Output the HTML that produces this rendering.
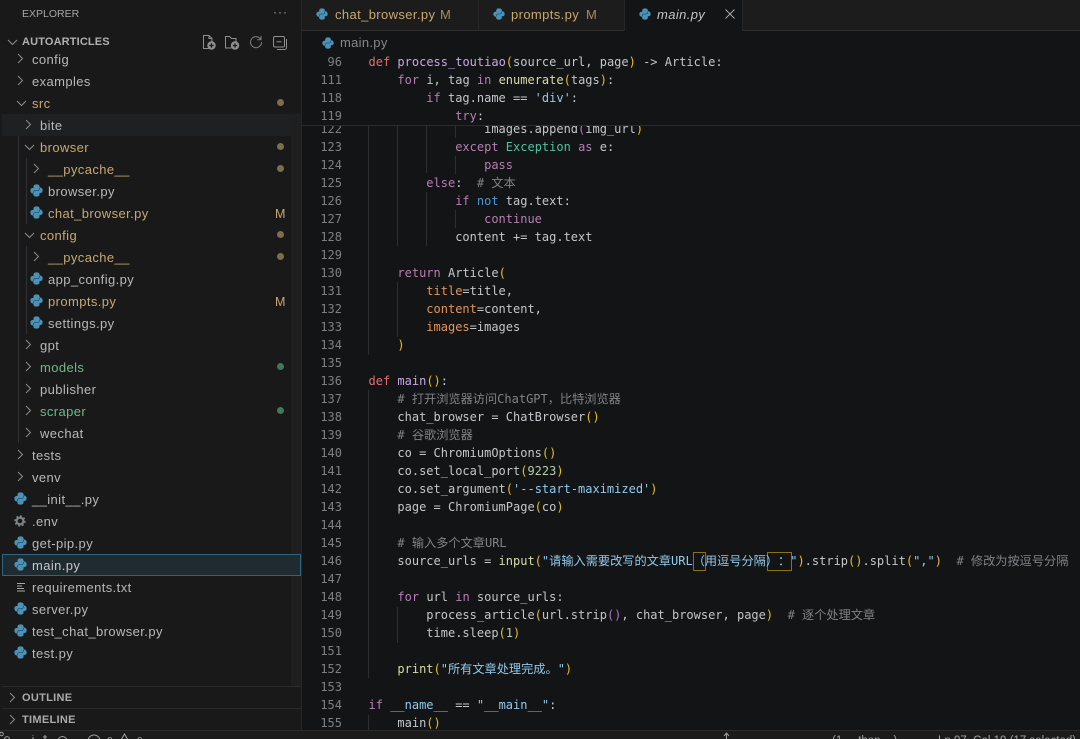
<!DOCTYPE html>
<html><head><meta charset="utf-8"><style>
html,body{margin:0;padding:0;background:#131416;width:1080px;height:739px;overflow:hidden}
#w{position:relative;width:1080px;height:739px;overflow:hidden;background:#131416;filter:blur(.35px)}
.a{position:absolute}
#side{position:absolute;left:0;top:0;width:301px;height:731px;background:#19191a;border-right:1px solid #26272a;font-family:"Liberation Sans",sans-serif;font-size:13px;letter-spacing:.4px;color:#b8b8b8}
.r{position:absolute;left:0;width:301px;height:22px;line-height:22px;white-space:nowrap}
.r span{position:absolute;top:1px}
.r svg{position:absolute}
.y{color:#c8a871}.g{color:#6db98a}
.dot{position:absolute;left:276.5px;width:7px;height:7px;border-radius:50%}
.dy{background:#7d6e4c}.dg{background:#42775c}
.m{position:absolute;left:275px;top:1px;color:#c8a871;font-size:12.5px}
.gd{position:absolute;width:1px;background:#2e3033}
.code{font-family:"DejaVu Sans Mono","Noto Sans CJK SC",monospace;font-size:12px;color:#c3c6ca;text-spacing-trim:space-all}
.l{position:absolute;left:302px;width:778px;height:18px;line-height:18px;white-space:pre;margin-top:.5px}
.l i{position:absolute;left:0;width:40px;text-align:right;font-style:normal;color:#7d8083}
.l b{position:absolute;left:66.5px;font-weight:normal;top:0}
.cj{font-family:"Noto Sans CJK SC",sans-serif;font-size:12.2px;line-height:0;text-spacing-trim:space-all}
.k{color:#b67eb3}.d{color:#df6f6c}.f{color:#c8a6e6}.e{color:#d9dba8}.br{color:#e6bf1f}.p2{color:#b56fc8}
.s{color:#93c9ea}.c{color:#7f8386}.cl{color:#50c0a0}.n{color:#b5cea8}.o{color:#e0955a}.b{color:#4f95cf}
.ig{position:absolute;width:1px;background:#2d2f32}
.ch{fill:none;stroke:#8c8c8c;stroke-width:1}
.tab{position:absolute;top:1px;height:29px;line-height:28px;font-family:"Liberation Sans",sans-serif;font-size:13px;letter-spacing:.38px;white-space:nowrap}
.st{position:absolute;top:734px;font-family:"Liberation Sans",sans-serif;font-size:11.5px;line-height:14px;color:#a0a0a0;white-space:pre}
</style></head><body><div id="w">
<svg width="0" height="0" style="position:absolute"><defs>
<g id="py"><g stroke="#4a93b8" stroke-width="1.5" stroke-linejoin="round"><path fill="#4a93b8" d="M8 1.2C5.7 1.2 5 2.2 5 3.4V5h3.3v.7H3.4C2.1 5.7 1.2 6.7 1.2 8.2s.9 2.7 2.2 2.7H5V9.3c0-1.2.9-2.1 2.1-2.1h2.3c1 0 1.7-.8 1.7-1.7V3.4c0-1.3-1.2-2.2-3.1-2.2z"/><path fill="#4a93b8" d="M8 14.8c2.3 0 3-1 3-2.2V11H7.7v-.7h4.9c1.3 0 2.2-1 2.2-2.5s-.9-2.7-2.2-2.7H11v1.6c0 1.2-.9 2.1-2.1 2.1H6.6c-1 0-1.7.8-1.7 1.7v2.1c0 1.3 1.2 2.2 3.1 2.2z"/></g><path d="M11.5 4.8v1c0 1.3-1 2.2-2.3 2.2H6.8c-1.3 0-2.3.9-2.3 2.2v1" fill="none" stroke="#17191b" stroke-width=".7" opacity=".75"/></g>
<path id="cr" d="M1 1l4.5 4.5L1 10"/>
<path id="cd" d="M1 1l4.5 4.5L10 1"/>
</defs></svg>

<!-- tab bar -->
<div class="a" style="left:302px;top:0;width:778px;height:30px;background:#1c1c1d;border-bottom:1px solid #2e2e2f"></div>
<div class="a" style="left:478px;top:0;width:1px;height:30px;background:#262627"></div>
<div class="a" style="left:624px;top:0;width:119px;height:31px;background:#131416;border-left:1px solid #262627;border-right:1px solid #262627;box-sizing:border-box"></div>
<svg class="a" style="left:316px;top:8px" width="12" height="12" viewBox="0 0 16 16"><use href="#py"/></svg>
<div class="tab y" style="left:335px">chat_browser.py</div><div class="tab y" style="left:440px;color:#a58c5f">M</div>
<svg class="a" style="left:493px;top:8px" width="12" height="12" viewBox="0 0 16 16"><use href="#py"/></svg>
<div class="tab y" style="left:511px">prompts.py</div><div class="tab y" style="left:586px;color:#a58c5f">M</div>
<svg class="a" style="left:639px;top:8px" width="12" height="12" viewBox="0 0 16 16"><use href="#py"/></svg>
<div class="tab" style="left:657px;color:#c4c4c4;font-style:italic">main.py</div>
<svg class="a" style="left:725px;top:9px" width="10" height="10"><path d="M.5.5l9 9M9.5.5l-9 9" stroke="#a8a8a8" fill="none"/></svg>

<div class="code">
<!-- indent guides -->
<div class="ig" style="left:368px;top:125px;height:230px"></div>
<div class="ig" style="left:397px;top:125px;height:121px"></div>
<div class="ig" style="left:426px;top:125px;height:48px"></div>
<div class="ig" style="left:426px;top:192px;height:54px"></div>
<div class="ig" style="left:455px;top:125px;height:13px"></div>
<div class="ig" style="left:455px;top:156px;height:18px"></div>
<div class="ig" style="left:455px;top:210px;height:18px"></div>
<div class="ig" style="left:397px;top:282px;height:55px"></div>
<div class="ig" style="left:368px;top:390px;height:288px"></div>
<div class="ig" style="left:397px;top:607px;height:36px"></div>
<div class="ig" style="left:368px;top:715px;height:16px"></div>

<div class="l" style="top:119.5px"><i>122</i><b>                <span>images.append</span><span class="p2">(</span>img_url<span class="br">)</span></b></div>
<div class="l" style="top:137.5px"><i>123</i><b>            <span class="k">except</span> <span class="cl">Exception</span> <span class="k">as</span> e:</b></div>
<div class="l" style="top:155.5px"><i>124</i><b>                <span class="k">pass</span></b></div>
<div class="l" style="top:173.5px"><i>125</i><b>        <span class="k">else</span>:  <span class="c"># <span class="cj">文本</span></span></b></div>
<div class="l" style="top:191.5px"><i>126</i><b>            <span class="k">if</span> <span class="b">not</span> tag.text:</b></div>
<div class="l" style="top:209.5px"><i>127</i><b>                <span class="k">continue</span></b></div>
<div class="l" style="top:227.5px"><i>128</i><b>            content += tag.text</b></div>
<div class="l" style="top:245.5px"><i>129</i></div>
<div class="l" style="top:263.5px"><i>130</i><b>    <span class="k">return</span> Article<span class="br">(</span></b></div>
<div class="l" style="top:281.5px"><i>131</i><b>        <span class="o">title</span>=title,</b></div>
<div class="l" style="top:299.5px"><i>132</i><b>        <span class="o">content</span>=content,</b></div>
<div class="l" style="top:317.5px"><i>133</i><b>        <span class="o">images</span>=images</b></div>
<div class="l" style="top:335.5px"><i>134</i><b>    <span class="br">)</span></b></div>
<div class="l" style="top:353.5px"><i>135</i></div>
<div class="l" style="top:371.5px"><i>136</i><b><span class="d">def</span> <span class="f">main</span><span class="br">()</span>:</b></div>
<div class="l" style="top:389.5px"><i>137</i><b>    <span class="c"># <span class="cj">打开浏览器访问</span>ChatGPT<span class="cj">，比特浏览器</span></span></b></div>
<div class="l" style="top:407.5px"><i>138</i><b>    chat_browser = ChatBrowser<span class="br">()</span></b></div>
<div class="l" style="top:425.5px"><i>139</i><b>    <span class="c"># <span class="cj">谷歌浏览器</span></span></b></div>
<div class="l" style="top:443.5px"><i>140</i><b>    co = ChromiumOptions<span class="br">()</span></b></div>
<div class="l" style="top:461.5px"><i>141</i><b>    co.set_local_port<span class="br">(</span><span class="n">9223</span><span class="br">)</span></b></div>
<div class="l" style="top:479.5px"><i>142</i><b>    co.set_argument<span class="br">(</span><span class="s">'--start-maximized'</span><span class="br">)</span></b></div>
<div class="l" style="top:497.5px"><i>143</i><b>    page = ChromiumPage<span class="br">(</span>co<span class="br">)</span></b></div>
<div class="l" style="top:515.5px"><i>144</i></div>
<div class="l" style="top:533.5px"><i>145</i><b>    <span class="c"># <span class="cj">输入多个文章</span>URL</span></b></div>
<div class="a" style="left:693px;top:552px;width:11px;height:17px;border:1px solid #8a7217"></div>
<div class="a" style="left:767px;top:552px;width:23px;height:17px;border:1px solid #8a7217"></div>
<div class="l" style="top:551.5px"><i>146</i><b>    source_urls = <span class="e">input</span><span class="br">(</span><span class="s">"<span class="cj">请输入需要改写的文章</span>URL<span class="cj">（用逗号分隔）：</span>"</span><span class="br">)</span>.strip<span class="br">()</span>.split<span class="br">(</span><span class="s">","</span><span class="br">)</span>  <span class="c"># <span class="cj">修改为按逗号分隔</span></span></b></div>
<div class="l" style="top:569.5px"><i>147</i></div>
<div class="l" style="top:587.5px"><i>148</i><b>    <span class="k">for</span> url <span class="k">in</span> source_urls:</b></div>
<div class="l" style="top:605.5px"><i>149</i><b>        process_article<span class="br">(</span>url.strip<span class="p2">()</span>, chat_browser, page<span class="br">)</span>  <span class="c"># <span class="cj">逐个处理文章</span></span></b></div>
<div class="l" style="top:623.5px"><i>150</i><b>        time.sleep<span class="br">(</span><span class="n">1</span><span class="br">)</span></b></div>
<div class="l" style="top:641.5px"><i>151</i></div>
<div class="l" style="top:659.5px"><i>152</i><b>    <span class="e">print</span><span class="br">(</span><span class="s">"<span class="cj">所有文章处理完成。</span>"</span><span class="br">)</span></b></div>
<div class="l" style="top:677.5px"><i>153</i></div>
<div class="l" style="top:695.5px"><i>154</i><b><span class="k">if</span> <span class="s">__name__</span> == <span class="s">"__main__"</span>:</b></div>
<div class="l" style="top:713.5px"><i>155</i><b>    main<span class="br">()</span></b></div>

<!-- sticky scroll -->
<div class="a" style="left:302px;top:31px;width:778px;height:94px;background:#131416;border-bottom:1px solid #2a2b2d"></div>
<svg class="a" style="left:322px;top:37px" width="12" height="12" viewBox="0 0 16 16"><use href="#py"/></svg>
<div class="a" style="left:340px;top:35px;font-family:'Liberation Sans',sans-serif;font-size:13px;letter-spacing:.3px;line-height:16px;color:#85878a">main.py</div>
<div class="l" style="top:52.5px"><i>96</i><b><span class="d">def</span> <span class="f">process_toutiao</span><span class="br">(</span>source_url, page<span class="br">)</span> -&gt; Article:</b></div>
<div class="l" style="top:70.5px"><i>111</i><b>    <span class="k">for</span> i, tag <span class="k">in</span> <span class="e">enumerate</span><span class="br">(</span>tags<span class="br">)</span>:</b></div>
<div class="l" style="top:88.5px"><i>118</i><b>        <span class="k">if</span> tag.name == <span class="s">'div'</span>:</b></div>
<div class="l" style="top:106.5px"><i>119</i><b>            <span class="k">try</span>:</b></div>
</div>

<!-- sidebar -->
<div id="side">
<div class="a" style="left:22px;top:6px;font-size:10.5px;line-height:16px;letter-spacing:0;color:#a6a6a6">EXPLORER</div>
<div class="a" style="left:273px;top:5px;font-size:12px;line-height:14px;letter-spacing:1px;color:#a0a0a0">···</div>
<svg class="a ch" style="left:7px;top:39px" width="11" height="7"><use href="#cd"/></svg>
<div class="a" style="left:22px;top:34px;font-size:11px;line-height:16px;font-weight:bold;letter-spacing:.15px;color:#b0b0b0">AUTOARTICLES</div>
<!-- toolbar icons -->
<svg class="a" style="left:201px;top:34px" width="18" height="17" fill="none" stroke="#8f8f8f"><path d="M8 14.5H2.5V1.5h5.5l3 3v3"/><path d="M8 1.5v3h3"/><circle cx="10.5" cy="11.5" r="4.2" fill="#8f8f8f" stroke="none"/><path d="M10.5 9.3v4.4M8.3 11.5h4.4" stroke="#19191a" stroke-width="1.2"/></svg>
<svg class="a" style="left:224px;top:34px" width="18" height="17" fill="none" stroke="#8f8f8f"><path d="M7.5 14H1.5V2.5h4l2 2h4.5v3"/><circle cx="11" cy="11.5" r="4.2" fill="#8f8f8f" stroke="none"/><path d="M11 9.3v4.4M8.8 11.5h4.4" stroke="#19191a" stroke-width="1.2"/></svg>
<svg class="a" style="left:249px;top:35px" width="14" height="14" fill="none" stroke="#808080"><path d="M11.8 4.5A5.5 5.5 0 1 0 12.5 7"/><path d="M12 1v3.8H8.2"/></svg>
<svg class="a" style="left:273px;top:36px" width="15" height="15" fill="none" stroke="#8f8f8f"><rect x=".5" y=".5" width="11" height="10.5" rx="1.5"/><path d="M3.5 5.7h5M13.5 3v8.5a2 2 0 0 1-2 2H4"/></svg>

<div class="gd" style="left:18px;top:114px;height:329px"></div>
<div class="gd" style="left:26px;top:158px;height:66px"></div>
<div class="gd" style="left:26px;top:246px;height:88px"></div>

<div class="a" style="left:2px;top:114px;width:299px;height:22px;background:#1e2022"></div>
<div class="a" style="left:291px;top:118px;width:10px;height:568px;background:#1f1f1f"></div>

<div class="r" style="top:48px"><svg class="ch" style="left:17px;top:5px" width="7" height="12"><use href="#cr"/></svg><span style="left:32px">config</span></div>
<div class="r" style="top:70px"><svg class="ch" style="left:17px;top:5px" width="7" height="12"><use href="#cr"/></svg><span style="left:32px">examples</span></div>
<div class="r y" style="top:92px"><svg class="ch" style="left:16px;top:8px" width="11" height="7"><use href="#cd"/></svg><span style="left:32px">src</span><div class="dot dy" style="top:7px"></div></div>
<div class="r" style="top:114px"><svg class="ch" style="left:25px;top:5px" width="7" height="12"><use href="#cr"/></svg><span style="left:40px">bite</span></div>
<div class="r y" style="top:136px"><svg class="ch" style="left:24px;top:8px" width="11" height="7"><use href="#cd"/></svg><span style="left:40px">browser</span><div class="dot dy" style="top:7px"></div></div>
<div class="r y" style="top:158px"><svg class="ch" style="left:33px;top:5px" width="7" height="12"><use href="#cr"/></svg><span style="left:48px">__pycache__</span><div class="dot dy" style="top:7px"></div></div>
<div class="r" style="top:180px"><svg style="left:30px;top:4px" width="13" height="13" viewBox="0 0 16 16"><use href="#py"/></svg><span style="left:48px">browser.py</span></div>
<div class="r y" style="top:202px"><svg style="left:30px;top:4px" width="13" height="13" viewBox="0 0 16 16"><use href="#py"/></svg><span style="left:48px">chat_browser.py</span><div class="m">M</div></div>
<div class="r y" style="top:224px"><svg class="ch" style="left:24px;top:8px" width="11" height="7"><use href="#cd"/></svg><span style="left:40px">config</span><div class="dot dy" style="top:7px"></div></div>
<div class="r y" style="top:246px"><svg class="ch" style="left:33px;top:5px" width="7" height="12"><use href="#cr"/></svg><span style="left:48px">__pycache__</span><div class="dot dy" style="top:7px"></div></div>
<div class="r" style="top:268px"><svg style="left:30px;top:4px" width="13" height="13" viewBox="0 0 16 16"><use href="#py"/></svg><span style="left:48px">app_config.py</span></div>
<div class="r y" style="top:290px"><svg style="left:30px;top:4px" width="13" height="13" viewBox="0 0 16 16"><use href="#py"/></svg><span style="left:48px">prompts.py</span><div class="m">M</div></div>
<div class="r" style="top:312px"><svg style="left:30px;top:4px" width="13" height="13" viewBox="0 0 16 16"><use href="#py"/></svg><span style="left:48px">settings.py</span></div>
<div class="r" style="top:334px"><svg class="ch" style="left:25px;top:5px" width="7" height="12"><use href="#cr"/></svg><span style="left:40px">gpt</span></div>
<div class="r g" style="top:356px"><svg class="ch" style="left:25px;top:5px" width="7" height="12"><use href="#cr"/></svg><span style="left:40px">models</span><div class="dot dg" style="top:7px"></div></div>
<div class="r" style="top:378px"><svg class="ch" style="left:25px;top:5px" width="7" height="12"><use href="#cr"/></svg><span style="left:40px">publisher</span></div>
<div class="r g" style="top:400px"><svg class="ch" style="left:25px;top:5px" width="7" height="12"><use href="#cr"/></svg><span style="left:40px">scraper</span><div class="dot dg" style="top:7px"></div></div>
<div class="r" style="top:422px"><svg class="ch" style="left:25px;top:5px" width="7" height="12"><use href="#cr"/></svg><span style="left:40px">wechat</span></div>
<div class="r" style="top:444px"><svg class="ch" style="left:17px;top:5px" width="7" height="12"><use href="#cr"/></svg><span style="left:32px">tests</span></div>
<div class="r" style="top:466px"><svg class="ch" style="left:17px;top:5px" width="7" height="12"><use href="#cr"/></svg><span style="left:32px">venv</span></div>
<div class="r" style="top:488px"><svg style="left:14px;top:4px" width="13" height="13" viewBox="0 0 16 16"><use href="#py"/></svg><span style="left:32px">__init__.py</span></div>
<div class="r" style="top:510px"><svg style="left:14px;top:5px" width="12" height="12" viewBox="0 0 12 12"><circle cx="6" cy="6" r="3.4" fill="none" stroke="#7f8484" stroke-width="2.2"/><circle cx="6" cy="6" r="5" fill="none" stroke="#7f8484" stroke-width="1.4" stroke-dasharray="1.9 2"/></svg><span style="left:32px">.env</span></div>
<div class="r" style="top:532px"><svg style="left:14px;top:4px" width="13" height="13" viewBox="0 0 16 16"><use href="#py"/></svg><span style="left:32px">get-pip.py</span></div>
<div class="a" style="left:2px;top:554px;width:299px;height:22px;box-sizing:border-box;background:#1f2a31;border:1px solid #2c6580"></div>
<div class="r" style="top:554px;color:#c4c6c8"><svg style="left:14px;top:4px" width="13" height="13" viewBox="0 0 16 16"><use href="#py"/></svg><span style="left:32px">main.py</span></div>
<div class="r" style="top:576px"><svg style="left:16px;top:6px" width="10" height="10" stroke="#a8a8a8"><path d="M1 1.5h8M1 4h5M1 6.5h7M1 9h8"/></svg><span style="left:32px">requirements.txt</span></div>
<div class="r" style="top:598px"><svg style="left:14px;top:4px" width="13" height="13" viewBox="0 0 16 16"><use href="#py"/></svg><span style="left:32px">server.py</span></div>
<div class="r" style="top:620px"><svg style="left:14px;top:4px" width="13" height="13" viewBox="0 0 16 16"><use href="#py"/></svg><span style="left:32px">test_chat_browser.py</span></div>
<div class="r" style="top:642px"><svg style="left:14px;top:4px" width="13" height="13" viewBox="0 0 16 16"><use href="#py"/></svg><span style="left:32px">test.py</span></div>

<div class="a" style="left:2px;top:686px;width:299px;height:1px;background:#2a2a2b"></div>
<div class="a" style="left:2px;top:708px;width:299px;height:1px;background:#2a2a2b"></div>
<svg class="a ch" style="left:9px;top:692px" width="7" height="12"><use href="#cr"/></svg>
<div class="a" style="left:22px;top:690px;font-size:11px;line-height:16px;font-weight:bold;letter-spacing:.3px;color:#aaa">OUTLINE</div>
<svg class="a ch" style="left:9px;top:714px" width="7" height="12"><use href="#cr"/></svg>
<div class="a" style="left:22px;top:712px;font-size:11px;line-height:16px;font-weight:bold;letter-spacing:.3px;color:#aaa">TIMELINE</div>
</div>

<!-- status bar -->
<div class="a" style="left:0;top:730px;width:1080px;height:9px;background:#1b1b1c;border-top:1px solid #2b2b2c;box-sizing:border-box"></div>
<svg class="a" style="left:0;top:731px" width="150" height="8" fill="none" stroke="#a0a0a0"><circle cx="1.5" cy="3" r="1.8"/><circle cx="7" cy="8" r="2.4"/><path d="M33 6v2M33 4.2v.8M45 4v4M43 6h4" /><circle cx="62.5" cy="10" r="4.5"/><circle cx="94" cy="10" r="6"/><path d="M124.500 3l-4 7h8z"/></svg>
<div class="st" style="left:107px;top:735px;font-size:10px">0</div>
<div class="st" style="left:137px;top:735px;font-size:10px">0</div>
<svg class="a" style="left:722px;top:731px" width="10" height="8" fill="none" stroke="#a0a0a0"><path d="M4.500 8V3M2 5l2.500-3L7 5"/></svg>
<div class="st" style="left:832px">(1 ... thon ...)</div>
<div class="st" style="left:938px">Ln 97, Col 19 (17 selected)</div>
</div></body></html>
